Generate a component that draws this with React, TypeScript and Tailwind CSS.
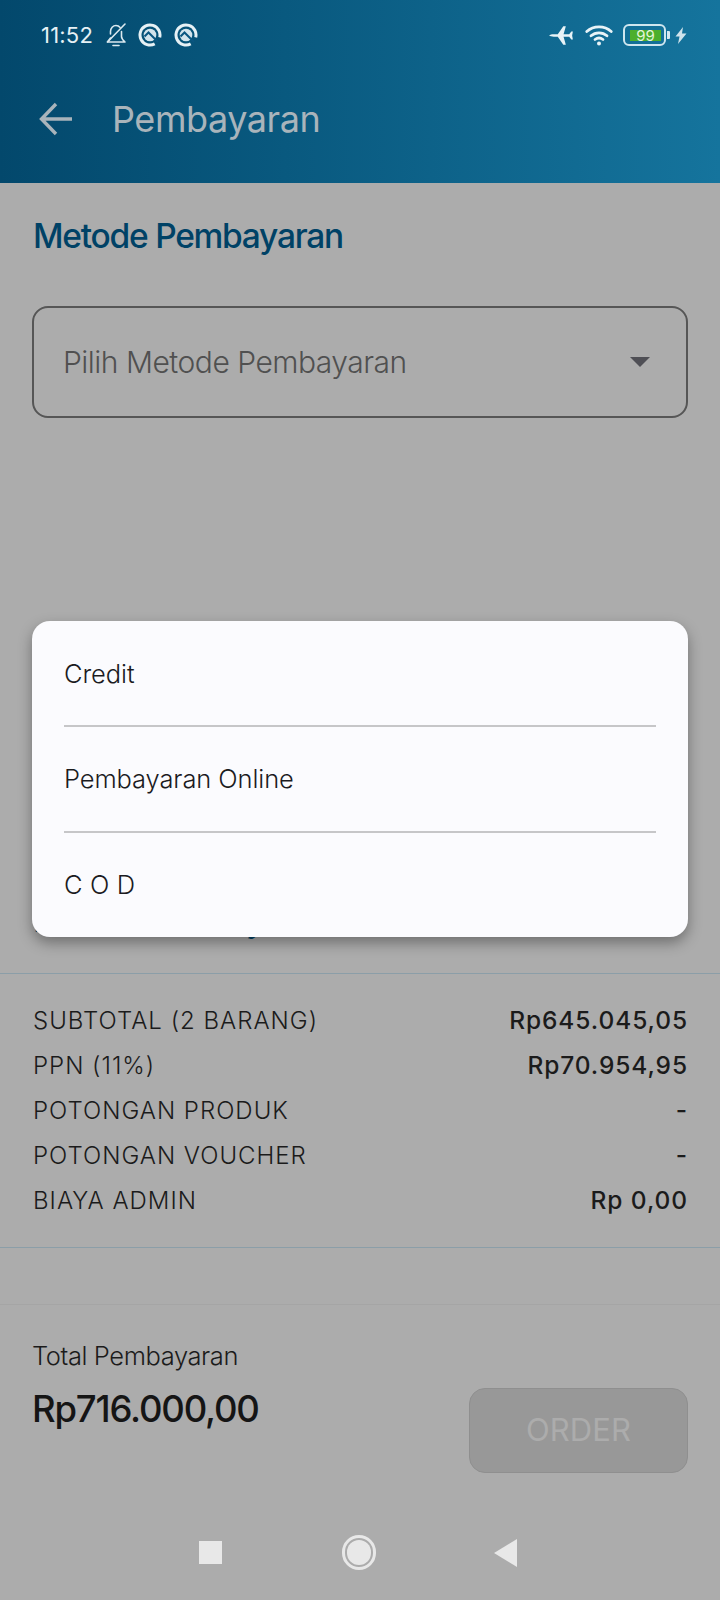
import React from "react";

const font = { fontFamily: "Inter, 'Noto Sans', sans-serif" };

function RingIcon() {
  return (
    <svg width="24" height="24" viewBox="0 0 24 24" fill="none">
      <circle cx="12" cy="12" r="10" stroke="#e6f1f5" strokeWidth="3" strokeDasharray="54 9" transform="rotate(62 12 12)" />
      <circle cx="12" cy="12" r="6.300" fill="#d3e4ec" />
      <path d="M6.500 13.500L10.500 9.500L20 19" stroke="#0a5680" strokeWidth="2" />
    </svg>
  );
}

function BellOff() {
  return (
    <svg width="22" height="24" viewBox="0 0 22 24" fill="none" stroke="#dbe9ef" strokeWidth="1.600" strokeLinejoin="round" strokeLinecap="round">
      <path d="M5.500 11V8.500C5.500 5 8 2.500 11 2.500c1.700 0 3.100.7 4.100 1.900" />
      <path d="M16.500 8.500v5c0 2 1.300 3.500 3.500 5.500H2.500l3-4" />
      <path d="M8 22.500h6" />
      <path d="M20 1L2.500 19" />
    </svg>
  );
}

function Plane() {
  return (
    <svg width="24" height="21" viewBox="0 0 26 23" fill="#e8f3f7">
      <path d="M0 11.500C1 10.700 3 10.200 5 10.200H9.500L15.500 1.500H18.300L15.800 10.200H22L24.300 7H26L25.200 11.500L26 16H24.300L22 12.800H15.800L18.300 21.500H15.500L9.500 12.800H5C3 12.800 1 12.300 0 11.500Z" />
    </svg>
  );
}

function Wifi() {
  return (
    <svg width="28" height="22" viewBox="0 0 28 22" fill="none" stroke="#e8f3f7" strokeWidth="2.800" strokeLinecap="round">
      <path d="M1.800 7.500C8.500 1.200 19.500 1.200 26.200 7.500" />
      <path d="M6 11.800c4.500-4 11.500-4 16 0" />
      <path d="M10 15.500c2.400-1.800 5.600-1.800 8 0" />
      <circle cx="14" cy="19.500" r="2" fill="#e8f3f7" stroke="none" />
    </svg>
  );
}

function Battery() {
  return (
    <div className="flex items-center">
      <div className="flex h-[22px] w-[43px] items-center rounded-[6px] border-2 border-[#cfe6ef] pl-[5px]">
        <div className="flex h-[11px] w-[31px] items-center justify-center bg-[#4caf2c] text-[15px] leading-none text-[#e5f5da]">99</div>
      </div>
      <div className="ml-[1px] h-[8px] w-[3px] rounded-r-[1px] bg-[#d5e9f1]" />
    </div>
  );
}

function Bolt() {
  return (
    <svg width="12" height="17" viewBox="0 0 12 17" fill="#cfe3ec">
      <path d="M8 0L0.500 9.500H4.500L3 17L11.500 6.500H7z" />
    </svg>
  );
}

function Row({ label, value }: { label: string; value: string }) {
  return (
    <div className="flex h-[45px] items-center justify-between">
      <span className="text-[24px] font-light tracking-[1px] text-[#1b1b1b]">{label}</span>
      <span className="text-[24.500px] font-medium tracking-[0.9px] text-[#1b1b1b]">{value}</span>
    </div>
  );
}

export default function App() {
  return (
    <div className="relative flex h-[1600px] w-[720px] flex-col overflow-hidden bg-[#acacac]" style={font}>
      <header className="h-[183px] shrink-0 bg-gradient-to-r from-[#03486c] to-[#15749d]">
        <div className="flex h-[70px] items-center justify-between pr-[33px] pl-[41px]">
          <div className="flex items-center">
            <span className="text-[22px] tracking-[0.2px] text-[#e6f1f5]">11:52</span>
            <div className="ml-[12px]"><BellOff /></div>
            <div className="ml-[11px]"><RingIcon /></div>
            <div className="ml-[12px]"><RingIcon /></div>
          </div>
          <div className="flex items-center">
            <Plane />
            <div className="ml-[12px]"><Wifi /></div>
            <div className="ml-[10px]"><Battery /></div>
            <div className="ml-[5px]"><Bolt /></div>
          </div>
        </div>
        <div className="flex h-[98px] items-center pl-[39px]">
          <svg width="34" height="34" viewBox="0 0 34 34" fill="none" stroke="#a9b4bb" strokeWidth="3.400">
            <path d="M33 17H3M17 2L2.500 17 17 32" />
          </svg>
          <span className="ml-[39px] text-[36px] tracking-[-0.45px] text-[#a9b4bb]">Pembayaran</span>
        </div>
      </header>

      <main className="flex flex-1 flex-col">
        <h1 className="mt-[31px] px-[33px] text-[33.500px] leading-[44px] font-medium tracking-[-1.25px] text-[#004266]">Metode Pembayaran</h1>
        <div className="mx-[32px] mt-[48px] flex h-[112px] items-center justify-between rounded-[16px] border-2 border-[#565656] pr-[36px] pl-[30px]">
          <span className="-ml-px text-[30px] font-light tracking-[-0.5px] text-[#505050]">Pilih Metode Pembayaran</span>
          <span className="h-0 w-0 border-x-[10px] border-t-[10px] border-x-transparent border-t-[#4f4f55]" />
        </div>
        <h2 className="mt-[480px] px-[33px] text-[33.500px] leading-[44px] font-medium tracking-[-1.8px] text-[#004266]">Rincian Pembayaran</h2>
        <div className="mt-[31px] border-y border-[#8b9ea8] pt-[24px] pr-[32px] pb-[24px] pl-[33px]">
          <Row label="SUBTOTAL (2 BARANG)" value="Rp645.045,05" />
          <Row label="PPN (11%)" value="Rp70.954,95" />
          <Row label="POTONGAN PRODUK" value="-" />
          <Row label="POTONGAN VOUCHER" value="-" />
          <Row label="BIAYA ADMIN" value="Rp 0,00" />
        </div>
        <footer className="mt-[56px] flex flex-1 flex-col border-t border-[#a5a5a5]">
          <div className="flex justify-between pr-[32px] pl-[32px]">
            <div className="pt-[34px]">
              <div className="text-[25.500px] leading-[34px] font-light tracking-[-0.4px] text-[#1b1b1b]">Total Pembayaran</div>
              <div className="mt-[16px] text-[36.500px] leading-[40px] font-medium tracking-[-1.2px] text-[#151515]">Rp716.000,00</div>
            </div>
            <button className="mt-[83px] flex h-[85px] w-[219px] items-center justify-center rounded-[16px] border border-[#8f8f8f] bg-[#989898] text-[31px] tracking-[0.1px] text-[#acacac]">ORDER</button>
          </div>
          <nav className="mt-[62px] flex items-center pl-[199px]">
            <div className="h-[23px] w-[23px] bg-[#e8e8e8]" />
            <div className="ml-[120px] flex h-[35px] w-[34px] items-center justify-center rounded-full border-[3px] border-[#e8e8e8]">
              <div className="h-[25px] w-[24px] rounded-full bg-[#e8e8e8]" />
            </div>
            <svg className="ml-[118px]" width="23" height="28" viewBox="0 0 23 28" fill="#e8e8e8"><path d="M23 0v28L0 14z" /></svg>
          </nav>
        </footer>
      </main>

      <div className="absolute top-[621px] left-[32px] w-[656px] rounded-[18px] bg-[#fbfbfe] px-[32px] shadow-[0_6px_14px_rgba(0,0,0,0.35)]">
        <div className="flex h-[106px] items-start border-b-2 border-[#c6c6c8] pt-[35px] text-[25.500px] leading-[36px] font-light tracking-[-0.1px] text-[#1b1b1f]">Credit</div>
        <div className="flex h-[106px] items-start border-b-2 border-[#c6c6c8] pt-[34px] text-[25.500px] leading-[36px] font-light tracking-[-0.1px] text-[#1b1b1f]">Pembayaran Online</div>
        <div className="flex h-[104px] items-start pt-[34px] text-[25.500px] leading-[36px] font-light tracking-[0.1px] text-[#1b1b1f]">C O D</div>
      </div>
    </div>
  );
}
